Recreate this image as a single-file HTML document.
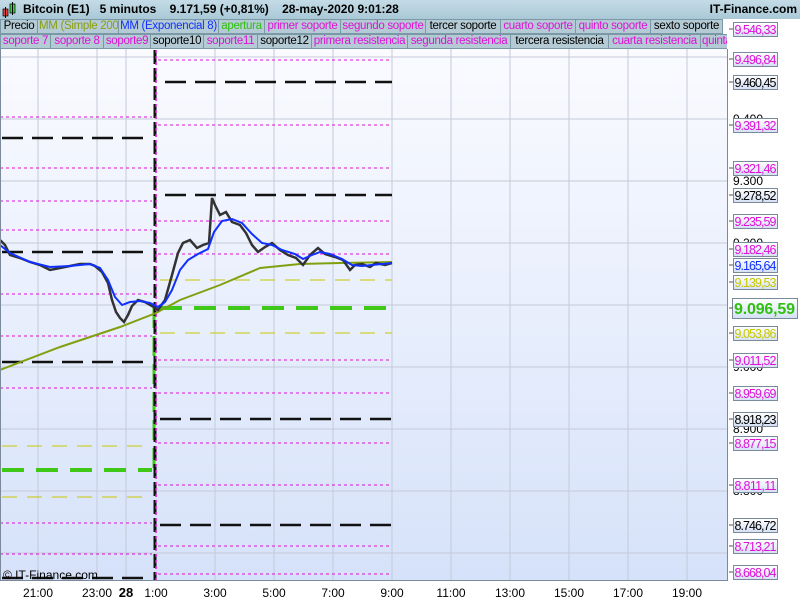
<!DOCTYPE html>
<html><head><meta charset="utf-8"><style>
body{margin:0;width:800px;height:600px;overflow:hidden;background:#fff;font-family:"Liberation Sans",sans-serif;position:relative}
.hdr{position:absolute;left:0;top:0;width:800px;height:19px;background:linear-gradient(#c4dce6,#a9c8d6);font-weight:bold;font-size:12px;line-height:19px}
.row{position:absolute;left:0;height:15px;font-size:11.5px;letter-spacing:-0.3px;line-height:15px;white-space:nowrap;width:727px;overflow:hidden;background:#fff;display:flex}
.row span{flex:none;display:block;overflow:hidden;box-sizing:border-box;border:1px solid #7a98a6;background:#b4cad4;padding:0 1px;height:15px;line-height:13px;margin-right:-1px;text-align:center}
.m{color:#e010d8}.k{color:#000}
</style></head><body>
<div class="hdr"><svg style="position:absolute;left:2px;top:2px" width="16" height="16"><rect x="1" y="7" width="5" height="7" fill="#e04040" stroke="#000" stroke-width=".7"/><line x1="3.5" y1="5" x2="3.5" y2="16" stroke="#000"/><rect x="8" y="2" width="5" height="9" fill="#40d040" stroke="#000" stroke-width=".7"/><line x1="10.5" y1="0" x2="10.5" y2="13" stroke="#000"/></svg>
<span style="position:absolute;left:23px">Bitcoin (E1)&nbsp;&nbsp; 5 minutos&nbsp;&nbsp;&nbsp; 9.171,59 (+0,81%)&nbsp;&nbsp;&nbsp; 28-may-2020 9:01:28</span>
<span style="position:absolute;right:3px">IT-Finance.com</span></div>
<div class="row" style="top:19px"><span class="k" style="width:38px">Precio</span><span style="color:#8aa010;width:82px">MM (Simple 200)</span><span style="color:#1030ff;width:101px">MM (Exponencial 8)</span><span style="color:#30c010;width:47px">apertura</span><span class="m" style="width:77px">primer soporte</span><span class="m" style="width:86px">segundo soporte</span><span class="k" style="width:76px">tercer soporte</span><span class="m" style="width:76px">cuarto soporte</span><span class="m" style="width:76px">quinto soporte</span><span class="k" style="width:73px">sexto soporte</span></div>
<div class="row" style="top:34px"><span class="m" style="width:51px">soporte 7</span><span class="m" style="width:54px">soporte 8</span><span class="m" style="width:48px">soporte9</span><span class="k" style="width:54px">soporte10</span><span class="m" style="width:55px">soporte11</span><span class="k" style="width:55px">soporte12</span><span class="m" style="width:97px">primera resistencia</span><span class="m" style="width:104px">segunda resistencia</span><span class="k" style="width:99px">tercera resistencia</span><span class="m" style="width:93px">cuarta resistencia</span><span class="m" style="width:40px;text-align:left">quinta resistencia</span></div>
<svg style="position:absolute;left:0;top:49px" width="800" height="551" viewBox="0 49 800 551" font-family="Liberation Sans, sans-serif">
<defs><linearGradient id="bg" x1="0" y1="0" x2="0" y2="1"><stop offset="0" stop-color="#fafbff"/><stop offset="1" stop-color="#d6e2fa"/></linearGradient>
<linearGradient id="lb" x1="0" y1="0" x2="0" y2="1"><stop offset="0" stop-color="#fff"/><stop offset="1" stop-color="#d4e0f4"/></linearGradient></defs>
<rect x="1" y="49" width="726" height="531" fill="url(#bg)"/>
<g stroke="#c4cad8" stroke-width="1">
<line x1="0" y1="57" x2="727" y2="57"/><line x1="0" y1="119" x2="727" y2="119"/><line x1="0" y1="181" x2="727" y2="181"/><line x1="0" y1="243" x2="727" y2="243"/><line x1="0" y1="305" x2="727" y2="305"/><line x1="0" y1="367" x2="727" y2="367"/><line x1="0" y1="429" x2="727" y2="429"/><line x1="0" y1="491" x2="727" y2="491"/><line x1="0" y1="553" x2="727" y2="553"/>
<line x1="38" y1="49" x2="38" y2="580"/><line x1="97" y1="49" x2="97" y2="580"/><line x1="126" y1="49" x2="126" y2="580"/><line x1="215" y1="49" x2="215" y2="580"/><line x1="274" y1="49" x2="274" y2="580"/><line x1="333" y1="49" x2="333" y2="580"/><line x1="392" y1="49" x2="392" y2="580"/><line x1="451" y1="49" x2="451" y2="580"/><line x1="510" y1="49" x2="510" y2="580"/><line x1="569" y1="49" x2="569" y2="580"/><line x1="628" y1="49" x2="628" y2="580"/><line x1="687" y1="49" x2="687" y2="580"/>
</g>
<g stroke="#e010d8" stroke-width="1" stroke-dasharray="3,3">
<path d="M0 117H152M0 168H152M0 201H152M0 230H152M0 294H152M0 336H152M0 388H152M0 523H152M0 554H152"/>
<path d="M158 60H392M158 125H392M158 168H392M158 221H392M158 254H392M158 360H392M158 393H392M158 443H392M158 485H392M158 546H392M158 574H392"/>
</g>
<g stroke="#111" stroke-width="2.5" stroke-dasharray="21,9">
<path d="M2 138H152M2 252H152M2 362H152M2 578H152"/>
<path d="M165 82H392M165 195H392M160 419H392M160 525H392"/>
</g>
<g stroke="#c8c800" stroke-width="1" stroke-dasharray="15,10"><path d="M2 446H152M2 497H152M160 280H392M160 333H392"/></g>
<g stroke="#40c818" stroke-width="4" stroke-dasharray="22,12"><path d="M2 470H152M160 308H392"/></g>
<path d="M154 308V470" stroke="#40c818" stroke-width="3" stroke-dasharray="20,8"/>
<path d="M155 50V580" stroke="#111" stroke-width="3" stroke-dasharray="14,4"/>
<path d="M156 50V580" stroke="#e010d8" stroke-width="1.5" stroke-dasharray="3,3"/>
<path d="M0 370L60 347L120 327L156 313L180 300L220 285L260 268L300 264L340 263L392 262" fill="none" stroke="#80a010" stroke-width="2"/>
<path d="M0 240L5 245L10 255L20 258L30 262L40 265L50 270L60 268L70 266L80 264L90 264L95 266L102 272L108 283L112 300L116 312L120 318L124 322L128 315L132 306L138 300L145 302L152 306L158 310L165 300L172 275L178 253L183 243L190 240L197 248L203 245L209 243L212 198L215 205L220 215L226 212L232 222L240 225L246 233L252 245L258 252L265 247L272 243L280 250L288 255L296 258L303 265L310 255L318 248L325 254L335 257L343 260L350 270L355 265L362 264L370 267L376 263L385 265L392 263" fill="none" stroke="#333" stroke-width="2.5"/>
<path d="M0 245L10 253L30 262L50 267L70 266L90 264L100 268L108 280L115 297L122 305L130 302L140 301L150 303L158 307L165 302L172 290L180 270L188 260L198 254L208 249L214 232L222 221L232 219L242 223L252 234L262 243L272 245L282 250L295 254L303 259L312 255L320 252L330 254L342 259L352 265L362 266L372 265L382 264L392 263" fill="none" stroke="#1030ff" stroke-width="2"/>
<text x="3" y="579" font-size="12" fill="#000">© IT-Finance.com</text>
<rect x="727" y="49" width="73" height="551" fill="#fff"/>
<line x1="727.5" y1="49" x2="727.5" y2="581" stroke="#7a8a9a"/>
<line x1="0" y1="580.5" x2="728" y2="580.5" stroke="#7a8a9a"/>
<line x1="0.5" y1="49" x2="0.5" y2="580" stroke="#7a8a9a"/>
<g font-size="12" fill="#000">
<text x="733" y="123" textLength="30">9.400</text><text x="733" y="185" textLength="30">9.300</text><text x="733" y="247" textLength="30">9.200</text><text x="733" y="371" textLength="30">9.000</text><text x="733" y="433" textLength="30">8.900</text><text x="733" y="495" textLength="30">8.800</text>
</g>
<g font-size="12.5" stroke-width="1">
<g stroke="#7a8a9a" fill="url(#lb)">
<rect x="733.5" y="52.5" width="44" height="14"/><rect x="733.5" y="75.5" width="44" height="14"/><rect x="733.5" y="118.5" width="44" height="14"/><rect x="733.5" y="161.5" width="44" height="14"/><rect x="733.5" y="188.5" width="44" height="14"/><rect x="733.5" y="214.5" width="44" height="14"/><rect x="733.5" y="242.5" width="44" height="14"/><rect x="733.5" y="258.5" width="44" height="14"/><rect x="733.5" y="275.5" width="44" height="14"/><rect x="732.5" y="298.5" width="65" height="20"/><rect x="733.5" y="326.5" width="44" height="14"/><rect x="733.5" y="353.5" width="44" height="14"/><rect x="733.5" y="386.5" width="44" height="14"/><rect x="733.5" y="412.5" width="44" height="14"/><rect x="733.5" y="436.5" width="44" height="14"/><rect x="733.5" y="478.5" width="44" height="14"/><rect x="733.5" y="518.5" width="44" height="14"/><rect x="733.5" y="539.5" width="44" height="14"/><rect x="733.5" y="565.5" width="44" height="14"/>
</g>
<g stroke-width="1"><path d="M729 59h4M729 82h4M729 125h4M729 168h4M729 195h4M729 221h4M729 249h4M729 265h4M729 282h4M729 308h4M729 333h4M729 360h4M729 393h4M729 419h4M729 443h4M729 485h4M729 525h4M729 546h4M729 572h4" stroke="#555"/></g>
<g fill="#e010d8"><text x="734.5" y="64" textLength="42">9.496,84</text><text x="734.5" y="130" textLength="42">9.391,32</text><text x="734.5" y="173" textLength="42">9.321,46</text><text x="734.5" y="226" textLength="42">9.235,59</text><text x="734.5" y="254" textLength="42">9.182,46</text><text x="734.5" y="365" textLength="42">9.011,52</text><text x="734.5" y="398" textLength="42">8.959,69</text><text x="734.5" y="448" textLength="42">8.877,15</text><text x="734.5" y="490" textLength="42">8.811,11</text><text x="734.5" y="551" textLength="42">8.713,21</text><text x="734.5" y="577" textLength="42">8.668,04</text></g>
<g fill="#000"><text x="734.5" y="87" textLength="42">9.460,45</text><text x="734.5" y="200" textLength="42">9.278,52</text><text x="734.5" y="424" textLength="42">8.918,23</text><text x="734.5" y="530" textLength="42">8.746,72</text></g>
<text x="734.5" y="270" fill="#1030ff" textLength="42">9.165,64</text>
<g fill="#c8c800"><text x="734.5" y="287" textLength="42">9.139,53</text><text x="734.5" y="338" textLength="42">9.053,86</text></g>
<text x="734" y="314" fill="#30c010" font-size="16" font-weight="bold" textLength="61">9.096,59</text>
</g>
<g font-size="12" fill="#000" text-anchor="middle">
<text x="38" y="597">21:00</text><text x="97" y="597">23:00</text><text x="126" y="597" font-weight="bold" font-size="13">28</text><text x="156" y="597">1:00</text><text x="215" y="597">3:00</text><text x="274" y="597">5:00</text><text x="333" y="597">7:00</text><text x="392" y="597">9:00</text><text x="451" y="597">11:00</text><text x="510" y="597">13:00</text><text x="569" y="597">15:00</text><text x="628" y="597">17:00</text><text x="687" y="597">19:00</text>
</g>
</svg>
<div style="position:absolute;left:727px;top:19px;width:73px;height:30px;background:#fff"></div>
<svg style="position:absolute;left:727px;top:19px" width="73" height="30"><defs><linearGradient id="lb2" x1="0" y1="0" x2="0" y2="1"><stop offset="0" stop-color="#fff"/><stop offset="1" stop-color="#d4e0f4"/></linearGradient></defs><path d="M2 10h4" stroke="#555"/><rect x="6.5" y="3.5" width="44" height="14" fill="url(#lb2)" stroke="#7a8a9a"/><text x="7.5" y="15" font-family="Liberation Sans, sans-serif" font-size="12.5" fill="#e010d8" textLength="42">9.546,33</text></svg>
</body></html>
